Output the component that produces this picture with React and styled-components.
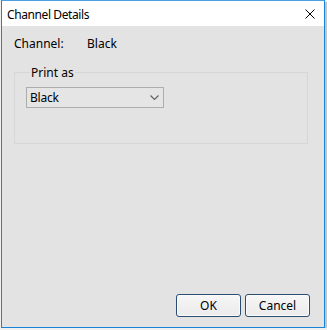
import React from "react";
import styled, { createGlobalStyle } from "styled-components";

const GlobalStyle = createGlobalStyle`
  html, body {
    margin: 0;
    padding: 0;
    background: #f0f0f0;
  }
  body {
    font-family: "Noto Sans", "Open Sans", Arial, sans-serif;
    font-size: 12px;
    color: #000;
  }
`;

export default function App() {
  return (
    <>
      <GlobalStyle />
      <Window>
        <TitleBar>
          <Title>Channel Details</Title>
          <CloseButton aria-label="Close">
            <svg width="10" height="10" viewBox="0 0 10 10">
              <path d="M0.5 0.5 L9.5 9.5 M9.5 0.5 L0.5 9.5" stroke="#000" strokeWidth="1" fill="none" />
            </svg>
          </CloseButton>
        </TitleBar>
        <Body>
          <InfoRow>
            <Label>Channel:</Label>
            <Value>Black</Value>
          </InfoRow>
          <GroupBox>
            <Legend>Print as</Legend>
            <Select>
              <span>Black</span>
              <svg width="9" height="5" viewBox="0 0 9 5">
                <path d="M0.5 0.5 L4.5 4.5 L8.5 0.5" stroke="#606060" strokeWidth="1.1" fill="none" />
              </svg>
            </Select>
          </GroupBox>
          <ButtonRow>
            <Button>OK</Button>
            <Button>Cancel</Button>
          </ButtonRow>
        </Body>
      </Window>
    </>
  );
}

//styles
const Window = styled.div`
  box-sizing: border-box;
  margin-left: 1px;
  width: 324px;
  height: 328px;
  border: 1px solid #1883d7;
  border-top-color: #4aa0e0;
  display: flex;
  flex-direction: column;
  box-shadow: 2px 2px 0 #c4c4c4;
`;

const TitleBar = styled.div`
  height: 25px;
  background: #fff;
  display: flex;
  align-items: center;
  justify-content: space-between;
  padding: 0 9px 0 5px;
  flex-shrink: 0;
`;

const Title = styled.div`
  font-size: 12px;
  letter-spacing: -0.4px;
  padding-top: 1px;
`;

const CloseButton = styled.div`
  width: 10px;
  height: 10px;
  display: flex;
  margin-top: 1px;
`;

const Body = styled.div`
  flex: 1;
  background: #e3e3e3;
  display: flex;
  flex-direction: column;
  padding: 9px 14px 10px 12px;
`;

const InfoRow = styled.div`
  display: flex;
  align-items: center;
  height: 16px;
`;

const Label = styled.div`
  width: 73px;
`;

const Value = styled.div``;

const GroupBox = styled.fieldset`
  margin: 13px 2px 0 0;
  padding: 6px 11px 0 11px;
  border: 1px solid #d6d6d6;
  height: 80px;
  box-sizing: border-box;
  min-width: 0;
`;

const Legend = styled.legend`
  padding: 0 1px;
  margin-left: 4px;
  font-size: 12px;
`;

const Select = styled.div`
  box-sizing: border-box;
  width: 138px;
  height: 21px;
  border: 1px solid #adadad;
  background: #e5e5e5;
  display: flex;
  align-items: center;
  justify-content: space-between;
  padding: 0 4px 0 3px;
  span {
    letter-spacing: -0.2px;
  }
`;

const ButtonRow = styled.div`
  margin-top: auto;
  display: flex;
  justify-content: flex-end;
  gap: 4px;
`;

const Button = styled.button`
  box-sizing: border-box;
  width: 65px;
  height: 23px;
  border: 1px solid #2c4d72;
  border-radius: 3px;
  background: linear-gradient(#f6f6f6, #ebebeb);
  box-shadow: inset 0 0 0 1px #fbfbfb;
  font-family: "Noto Sans", "Open Sans", Arial, sans-serif;
  font-size: 12px;
  color: #000;
  padding: 0;
`;
